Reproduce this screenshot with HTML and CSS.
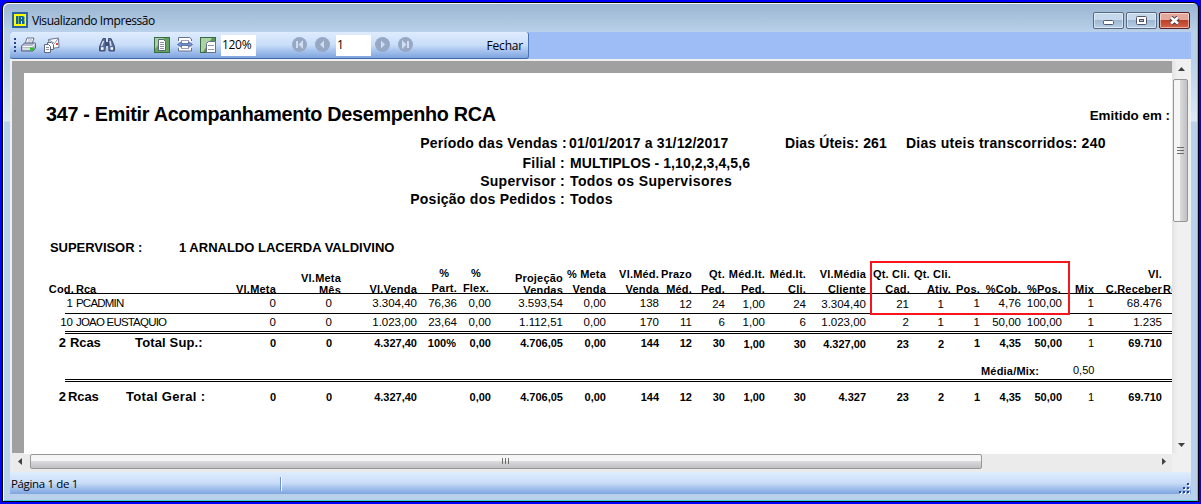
FILE: index.html
```html
<!DOCTYPE html>
<html lang="pt-BR">
<head>
  <meta charset="UTF-8">
  <title>Visualizando Impressão</title>
  <link rel="stylesheet" href="styles.css">
</head>
<body>
  <div class="window">
    <div class="titlebar">
      <svg class="app-icon" width="16" height="16" viewBox="0 0 16 16">
        <rect width="16" height="16" fill="#2c62a0"/>
        <rect x="2" y="2" width="12" height="12" fill="#ff0"/>
        <path d="M4 4h2.500v8H4zM7 4h4l1.500 1v2.500l-1 .5 1 .5V12H10V9H9v3H7zM9 5.500V7h1V5.500z" fill="#0a62a8" fill-rule="evenodd"/>
      </svg>
      <span class="caption">Visualizando Impressão</span>
      <div class="win-buttons">
        <span class="win-btn"><svg width="29" height="15"><rect x="9.500" y="7.500" width="10" height="4" rx="1" fill="#fff" stroke="#535666"/></svg></span>
        <span class="win-btn"><svg width="29" height="15"><rect x="9.500" y="3.500" width="10" height="8" rx="1" fill="#fff" stroke="#535666"/><rect x="12.500" y="6.500" width="4" height="2" fill="#9fbcdb" stroke="#535666"/></svg></span>
        <span class="win-btn close"><svg width="29" height="15"><path d="M11 4.500l7 6M18 4.500l-7 6" stroke="#4b3a48" stroke-width="4.600"/><path d="M11 4.500l7 6M18 4.500l-7 6" stroke="#fff" stroke-width="2.600"/></svg></span>
      </div>
    </div>

    <div class="client">
      <div class="toolbar-row">
        <div class="toolbar">
          <svg class="grip" width="3" height="15"><path d="M1 1v15" stroke="#27418b" stroke-width="2" stroke-dasharray="2 2"/></svg>
          <!-- print -->
          <svg class="ic-print" width="16" height="16" viewBox="0 0 16 16">
            <path d="M4 7l2-6h7l-2 6z" fill="#fff" stroke="#66708c"/>
            <path d="M7 3h4M6.500 5h4" stroke="#8b93ad" stroke-width=".8"/>
            <path d="M.5 9l3-3h11v5l-2.500 3H.5z" fill="#b4b9cb" stroke="#596383"/>
            <path d="M1.500 9.500h10l2.500-3" fill="none" stroke="#fff"/>
            <path d="M1.500 12h8" stroke="#e9ebf2" stroke-width="1.500"/>
            <rect x="9" y="10.500" width="4" height="3" fill="#24c81c"/>
          </svg>
          <!-- e-mail -->
          <svg class="ic-mail" width="16" height="16" viewBox="0 0 16 16">
            <path d="M4.500 2.500l10-1.500.5 9.500-9 1z" fill="#fff" stroke="#6a7390"/>
            <path d="M4.500 2.500l6 4 4-5.500" fill="none" stroke="#8c94ac"/>
            <path d="M12 6h2v2h-2z" fill="#e0492f"/>
            <path d="M3.500 5.500h4l2 2v5h-6z" fill="#fff" stroke="#5f6986"/>
            <path d="M.5 7.500h4l2 2v6h-6z" fill="#fff" stroke="#5f6986"/>
            <path d="M2 10.500h3M2 12.500h3" stroke="#8790ad"/>
          </svg>
          <!-- find -->
          <svg class="ic-find" width="16" height="14" viewBox="0 0 16 14">
            <path d="M4 .5h2.500V5L6 13H.5V8.500zM9.500 .5H12l3.500 8V13H10l-.5-8z" fill="#5a6c98" stroke="#3f5079"/>
            <path d="M6 4h4v4H6z" fill="#3f5079"/>
            <path d="M4.500 3L2.500 8M11 3l1 5" stroke="#d5ddf0" stroke-width="1.500"/>
            <path d="M2 10.500h2.500M11.500 10.500H14" stroke="#fff" stroke-width="2.500"/>
          </svg>
          <!-- whole page -->
          <svg class="ic-page" width="16" height="16" viewBox="0 0 16 16">
            <rect x=".5" y=".5" width="15" height="15" fill="#64a25e" stroke="#376d42"/>
            <path d="M1 1h9L1 12z" fill="#a9cfa3"/>
            <path d="M4.500 2.500h5l2 2v9h-7z" fill="#fff" stroke="#58637d"/>
            <path d="M6 5.500h4M6 7.500h4M6 9.500h4M6 11.500h4" stroke="#8c95a8"/>
          </svg>
          <!-- page width -->
          <svg class="ic-width" width="16" height="15" viewBox="0 0 16 15">
            <path d="M1.500 4V.5h11l2 1.500v2M1.500 11v3h13v-3" fill="#fff" stroke="#66718d"/>
            <path d="M2 3h12v9H2z" fill="#fff"/>
            <path d="M4 3.500h8M4 11.500h8" stroke="#9aa3b8"/>
            <path d="M.5 7.500l4-3v2h7v-2l4 3-4 3v-2h-7v2z" fill="#7190cf" stroke="#4c628f" stroke-width=".8"/>
          </svg>
          <!-- actual size -->
          <svg class="ic-size" width="16" height="16" viewBox="0 0 16 16">
            <rect x=".5" y=".5" width="15" height="15" fill="#58974f" stroke="#376d42"/>
            <path d="M1 1h11L3 15H1z" fill="#acd2a5"/>
            <path d="M6.500 15.500V6.500l2-2h7v11z" fill="#fff" stroke="#66718d"/>
            <path d="M8 8.500h6M8 12.500h6" stroke="#8d96aa"/>
          </svg>
          <span class="field zoom">120%</span>
          <svg class="nav first" width="15" height="15" viewBox="0 0 15 15"><circle cx="7.500" cy="7.500" r="7.500" fill="#96a8c4"/><path d="M11 3v9L6.500 7.500zM4 4h2v7H4z" fill="#d1ddf0"/></svg>
          <svg class="nav prev" width="15" height="15" viewBox="0 0 15 15"><circle cx="7.500" cy="7.500" r="7.500" fill="#96a8c4"/><path d="M9 3.500v8l-4-4z" fill="#d1ddf0"/></svg>
          <span class="field page-no">1</span>
          <svg class="nav next" width="15" height="15" viewBox="0 0 15 15"><circle cx="7.500" cy="7.500" r="7.500" fill="#96a8c4"/><path d="M6 3.500v8l4-4z" fill="#d1ddf0"/></svg>
          <svg class="nav last" width="15" height="15" viewBox="0 0 15 15"><circle cx="7.500" cy="7.500" r="7.500" fill="#96a8c4"/><path d="M4 3v9l4.500-4.500zM9 4h2v7H9z" fill="#d1ddf0"/></svg>
          <span class="close-label">Fechar</span>
        </div>
      </div>

      <div class="viewer">
        <div class="canvas">
          <div class="page">
            <div class="heading">
              <h1>347 - Emitir Acompanhamento Desempenho RCA</h1>
              <span class="issued">Emitido em :</span>
            </div>
            <div class="filters">
              <div class="filter first-filter">
                <span class="flabel">Período das Vendas :</span><span class="fvalue period">01/01/2017 a 31/12/2017</span>
                <span class="days">Dias Úteis: 261</span><span class="days-gone">Dias uteis transcorridos: 240</span>
              </div>
              <div class="filter"><span class="flabel">Filial :</span><span class="fvalue branches">MULTIPLOS - 1,10,2,3,4,5,6</span></div>
              <div class="filter"><span class="flabel">Supervisor :</span><span class="fvalue">Todos os Supervisores</span></div>
              <div class="filter"><span class="flabel">Posição dos Pedidos :</span><span class="fvalue">Todos</span></div>
            </div>
            <div class="supervisor"><span class="sup-label">SUPERVISOR :</span><span class="sup-name">1 ARNALDO LACERDA VALDIVINO</span></div>

            <div class="report">
              <div class="row head">
                <span class="cod">Cod.</span><span class="name">Rca</span>
                <span>Vl.Meta</span>
                <span class="tight mes">Vl.Meta<br>Mês</span>
                <span>Vl.Venda</span>
                <span class="mid">%<br>Part.</span>
                <span class="mid flex">%<br>Flex.</span>
                <span class="tight">Projeção<br>Vendas</span>
                <span>% Meta<br>Venda</span>
                <span>Vl.Méd.<br>Venda</span>
                <span>Prazo<br>Méd.</span>
                <span>Qt.<br>Ped.</span>
                <span>Méd.It.<br>Ped.</span>
                <span>Méd.It.<br>Cli.</span>
                <span>Vl.Média<br>Cliente</span>
                <span class="cad">Qt. Cli.<br>Cad.</span>
                <span class="ativ">Qt. Cli.<br>Ativ.</span>
                <span>Pos.</span>
                <span>%Cob.</span>
                <span class="ppos">%Pos.</span>
                <span>Mix</span>
                <span>Vl.<br>C.Receber</span>
                <span class="cut">Re</span>
              </div>
              <div class="rule"></div>
              <div class="row item">
                <span>1</span><span class="name">PCADMIN</span>
                <span>0</span><span>0</span><span>3.304,40</span><span>76,36</span><span>0,00</span><span>3.593,54</span><span>0,00</span><span>138</span>
                <span class="low">12</span><span class="low">24</span><span class="low">1,00</span><span class="low">24</span><span class="low">3.304,40</span><span class="low">21</span><span class="low">1</span>
                <span>1</span><span>4,76</span><span>100,00</span><span>1</span><span>68.476</span>
              </div>
              <div class="rule"></div>
              <div class="row item second">
                <span>10</span><span class="name">JOAO EUSTAQUIO</span>
                <span>0</span><span>0</span><span>1.023,00</span><span>23,64</span><span>0,00</span><span>1.112,51</span><span>0,00</span><span>170</span>
                <span class="low">11</span><span class="low">6</span><span class="low">1,00</span><span class="low">6</span><span class="low">1.023,00</span><span class="low">2</span><span class="low">1</span>
                <span>1</span><span>50,00</span><span>100,00</span><span>1</span><span>1.235</span>
              </div>
              <div class="rule double"></div>
              <div class="row total">
                <span class="big count">2</span><span class="big label"><span>Rcas</span><span>Total Sup.:</span></span>
                <span>0</span><span>0</span><span>4.327,40</span><span class="pct">100%</span><span>0,00</span><span>4.706,05</span><span>0,00</span><span>144</span>
                <span>12</span><span>30</span><span class="low">1,00</span><span class="low">30</span><span class="low">4.327,00</span><span class="low">23</span><span class="low">2</span>
                <span>1</span><span>4,35</span><span>50,00</span><span class="plain">1</span><span>69.710</span>
              </div>
              <div class="mix-line"><span class="mix-label">Média/Mix:</span><span class="mix-value">0,50</span></div>
              <div class="rule double"></div>
              <div class="row total grand">
                <span class="big count">2</span><span class="big label"><span>Rcas</span><span>Total Geral :</span></span>
                <span>0</span><span>0</span><span>4.327,40</span><span></span><span>0,00</span><span>4.706,05</span><span>0,00</span><span>144</span>
                <span>12</span><span>30</span><span>1,00</span><span>30</span><span>4.327</span><span>23</span><span>2</span>
                <span>1</span><span>4,35</span><span>50,00</span><span class="plain">1</span><span>69.710</span>
              </div>
              <div class="highlight"></div>
            </div>
          </div>
        </div>

        <div class="vscroll">
          <svg class="arrow" width="17" height="17"><path d="M5 10l3.500-4 3.500 4z" fill="#404040"/></svg>
          <div class="vthumb"><svg width="8" height="9"><path d="M0 1.500h7M0 4.500h7M0 7.500h7" stroke="#6d6d6d"/></svg></div>
          <svg class="arrow" width="17" height="17"><path d="M5 7h7l-3.500 4z" fill="#404040"/></svg>
        </div>
      </div>

      <div class="hscroll">
        <svg class="arrow" width="18" height="15"><path d="M10 4v7L6 7.500z" fill="#404040"/></svg>
        <div class="hthumb"><svg width="8" height="7"><path d="M.5 0v6M3.500 0v6M6.500 0v6" stroke="#6d6d6d"/></svg></div>
        <svg class="arrow" width="18" height="15"><path d="M8 4v7l4-3.500z" fill="#404040"/></svg>
      </div>

      <div class="statusbar">
        <span class="page-info">Página 1 de 1</span>
        <svg class="resize" width="12" height="12">
          <path d="M9 1h2v2H9zM5 5h2v2H5zM9 5h2v2H9zM1 9h2v2H1zM5 9h2v2H5zM9 9h2v2H9z" fill="#fff" transform="translate(1 1)"/>
          <path d="M9 1h2v2H9zM5 5h2v2H5zM9 5h2v2H9zM1 9h2v2H1zM5 9h2v2H5zM9 9h2v2H9z" fill="#27418b"/>
        </svg>
      </div>
    </div>
  </div>
</body>
</html>
```
FILE: styles.css
```css
* {
  box-sizing: border-box;
}
body {
  margin: 0;
  padding: 2px;
  height: 504px;
  background: #0000ff;
  font-family: "Open Sans", sans-serif;
  font-size: 12px;
  color: #000;
  overflow: hidden;
}
svg {
  display: block;
  flex: none;
}

/* Window frame */
.window {
  width: 1197px;
  height: 500px;
  padding: 0 6px 6px;
  border: 1px solid #000;
  border-radius: 6px 6px 0 0;
  background: linear-gradient(#99b4d1 0, #b9d1ea 29px, #b9d1ea 60px, #dce9f6 118px, #b9d1ea 119px);
  box-shadow: inset 1px 1px 0 #f4f9ff, inset -1px -1px 0 #3fd0e4;
}
.titlebar {
  display: flex;
  align-items: flex-start;
  height: 29px;
  padding: 9px 2px 0 3px;
}
.caption {
  margin-left: 4px;
  line-height: 17px;
  letter-spacing: -0.42px;
}
.win-buttons {
  display: flex;
  gap: 2px;
  margin-left: auto;
}
.win-btn {
  width: 31px;
  height: 17px;
  border: 1px solid #56697f;
  border-radius: 2px;
  background: linear-gradient(#c5d8ec 45%, #9db8d4 50%, #b8d0e8);
  box-shadow: inset 0 0 0 1px rgba(255, 255, 255, 0.5);
}
.win-btn.close {
  border-color: #5b1c22;
  background: linear-gradient(#e5a79c 45%, #bd4027 50%, #d2654b);
}
.client {
  width: 1181px;
  height: 462px;
  margin-left: 1px;
  background: #f0f0f0;
}

/* Toolbar */
.toolbar-row {
  height: 27px;
  background: #9ebcf5;
}
.toolbar {
  display: flex;
  align-items: center;
  width: 519px;
  height: 27px;
  padding: 0 0 1px 4px;
  border-radius: 3px;
  border-right: 1px solid #4a73b5;
  border-bottom: 1px solid #3f66a8;
  background: linear-gradient(#dfecfe, #c9ddf8 50%, #a9c5ee 70%, #7da4df);
}
.ic-print { margin-left: 4px; }
.ic-mail { margin-left: 7px; }
.ic-find { margin-left: 39px; }
.ic-page { margin-left: 39px; }
.ic-width { margin-left: 7px; }
.ic-size { margin-left: 7px; }
.field {
  height: 21px;
  margin-top: 1px;
  padding-left: 1px;
  background: #fff;
  line-height: 19px;
}
.zoom {
  width: 35px;
  margin-left: 5px;
  letter-spacing: -0.3px;
}
.nav.first { margin-left: 36px; }
.nav.prev { margin-left: 8px; }
.page-no {
  width: 35px;
  margin-left: 6px;
}
.nav.next { margin-left: 4px; }
.nav.last { margin-left: 8px; }
.close-label {
  margin-left: auto;
  padding: 2px 5px 0 0;
  letter-spacing: -0.2px;
}

/* Report viewer */
.viewer {
  display: flex;
  height: 394px;
  padding: 2px 1px 0 2px;
}
.canvas {
  width: 1160px;
  height: 392px;
  padding: 12px 0 0 12px;
  background: #a0a0a0;
}
.page {
  width: 1148px;
  height: 381px;
  background: #fff;
  overflow: hidden;
  font-family: "Liberation Sans", Arial, sans-serif;
  white-space: nowrap;
}
.heading {
  display: flex;
  justify-content: space-between;
  align-items: center;
  height: 61px;
  padding: 22px 2px 0 22px;
}
h1 {
  margin: 0;
  font-size: 19.8px;
  letter-spacing: -0.29px;
}
.issued {
  padding-top: 2px;
  font-size: 13.4px;
  font-weight: bold;
}
.filter {
  display: flex;
  height: 18px;
  line-height: 18px;
  font-size: 14px;
  font-weight: bold;
  letter-spacing: 0.26px;
}
.first-filter {
  height: 20px;
}
.flabel {
  width: 541px;
  text-align: right;
}
.first-filter .flabel {
  width: 543px;
}
.fvalue {
  margin-left: 5px;
  letter-spacing: 0.4px;
}
.branches {
  letter-spacing: 0.08px;
}
.period {
  width: 216px;
  margin-left: 2px;
  letter-spacing: 0.16px;
}
.days {
  width: 121px;
  letter-spacing: 0.16px;
}
.supervisor {
  display: flex;
  height: 58px;
  padding: 31px 0 0 26px;
  font-size: 13px;
  font-weight: bold;
  line-height: 18px;
}
.sup-label {
  width: 129px;
  letter-spacing: -0.05px;
}

/* Report grid */
.report {
  position: relative;
}
.row {
  display: grid;
  grid-template-columns: 49px 147px 56px 56px 85px 40px 34px 72px 43px 53px 33px 33px 40px 41px 60px 43px 35px 36px 41px 41px 32px 68px 10px;
  align-items: center;
  justify-items: end;
  font-size: 11.5px;
  line-height: 14px;
}
.row .name {
  justify-self: start;
  padding-left: 3px;
  letter-spacing: -0.8px;
}
.head {
  height: 27px;
  align-items: end;
  text-align: right;
  font-size: 11px;
  font-weight: bold;
  line-height: 15px;
  letter-spacing: 0.2px;
}
.head span {
  margin-bottom: -1px;
}
.head .name {
  letter-spacing: 0;
}
.head .cod {
  margin-right: -1px;
}
.head .tight {
  line-height: 12px;
  margin-bottom: 0;
}
.head .mes {
  margin-right: -9px;
}
.head .mid {
  margin-bottom: 0;
  text-align: center;
}
.head .flex {
  margin-right: 2px;
}
.head .cad {
  margin-right: -1px;
}
.head .ativ {
  margin-right: -7px;
}
.head .ppos {
  margin-right: 1px;
}
.head .cut {
  justify-self: start;
  margin-left: 1px;
}
.rule {
  height: 1px;
  margin-left: 41px;
  background: #000;
}
.rule.double {
  height: 3px;
  border-top: 1px solid #000;
  border-bottom: 1px solid #000;
  background: #fff;
}
.item {
  height: 19px;
  padding-bottom: 1px;
}
.item.second {
  height: 17px;
  padding-bottom: 4px;
}
.low {
  padding-top: 2px;
}
.second .low {
  padding-top: 1px;
}
.total {
  height: 17px;
  padding-top: 1px;
  font-size: 11px;
  font-weight: bold;
}
.total .pct {
  margin-right: 1px;
}
.total .plain {
  font-weight: normal;
}
.big {
  font-size: 13px;
}
.count {
  margin-right: 7px;
}
.label {
  display: flex;
  justify-self: stretch;
  margin-left: -3px;
  letter-spacing: 0.15px;
}
.label span:first-child {
  width: 65px;
  letter-spacing: -0.1px;
}
.mix-line {
  display: flex;
  height: 28px;
  padding: 13px 0 0 957px;
  font-size: 11px;
  line-height: 14px;
}
.mix-label {
  width: 92px;
  font-weight: bold;
  letter-spacing: 0.2px;
}
.mix-value {
  margin-top: -1px;
}
.grand {
  height: 29px;
}
.grand .label {
  margin-left: -5px;
}
.grand .label span:first-child {
  width: 58px;
}
.grand .label span:last-child {
  letter-spacing: 0.35px;
}

/* Red marker over the client columns */
.highlight {
  position: absolute;
  left: 846px;
  top: -5px;
  width: 200px;
  height: 54px;
  border: 2px solid #f8141c;
}

/* Scrollbars */
.vscroll {
  display: flex;
  flex-direction: column;
  width: 18px;
  height: 392px;
  padding-left: 1px;
  background: linear-gradient(90deg, #e3e3e3, #f0f0f0 30%);
}
.vthumb {
  display: flex;
  align-items: center;
  justify-content: center;
  width: 15px;
  height: 143px;
  margin: 1px 0 auto;
  border: 1px solid #979797;
  border-radius: 2px;
  background: linear-gradient(90deg, #f5f5f5 45%, #d9dadc 50%, #c0c0c4);
}
.hscroll {
  display: flex;
  align-items: center;
  width: 1162px;
  height: 19px;
  padding: 0 0 3px 2px;
  background: #ebebeb;
}
.hthumb {
  display: flex;
  align-items: center;
  justify-content: center;
  width: 952px;
  height: 15px;
  margin-right: auto;
  border: 1px solid #979797;
  border-radius: 2px;
  background: linear-gradient(#f5f5f5 45%, #d9dadc 50%, #c0c0c4);
}

/* Status bar */
.statusbar {
  display: flex;
  align-items: center;
  justify-content: space-between;
  height: 22px;
  padding: 2px 1px 0 1px;
  background: linear-gradient(#dfecfe, #c9ddf8 50%, #a9c5ee 70%, #7da4df);
  font-size: 11.5px;
  letter-spacing: -0.35px;
}
.page-info {
  width: 270px;
  border-right: 1px solid #6d93d6;
  line-height: 14px;
  box-shadow: 1px 0 0 #fff;
}
.resize {
  align-self: flex-end;
}
```
